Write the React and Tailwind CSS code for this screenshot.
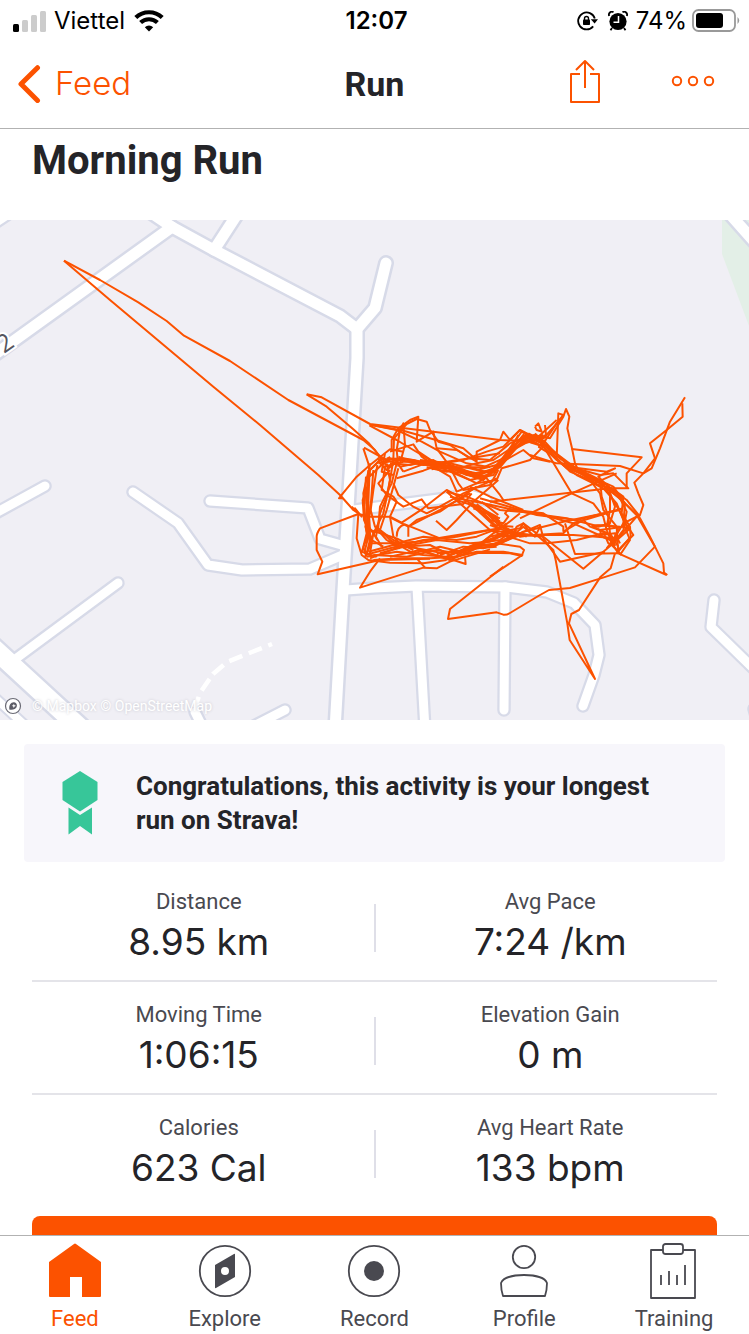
const ROADS = [
  'M-8 225 L10 213',
  'M45 486 L-6 514',
  'M133 492 L178 523 L208 565 L242 570 L310 569 L345 554',
  'M210 501 L308 508 L320 539 L345 546',
  'M118 583 L14 660',
  'M285 710 L246 730',
  'M195 712 L205 732',
  'M354 510 L400 504 L470 495 L486 500',
  'M346 590 L374 588 L416 586 L506 587 L547 592 L574 603 L595 625 L599 655 L594 675 L583 706',
  'M417 587 L425 730',
  'M505 587 L504 710',
  'M714 600 L711 627 L755 670',
  'M754 709 L760 730',
]

const MAIN_ROADS = [
  'M-10 358 L172 227',
  'M144 208 L172 227 L214 250 L340 316 L357 329',
  'M214 250 L238 213',
  'M386 263 L375 308 L357 329 L357 358 L350 475 L343 590 L335 730',
  'M728 212 L760 248',
]

// Track points sit on a grid three times finer than the map
const TRACK = [
  'M-678 -358 L-570 -300 L-455 -233 L-370 -177 L-318 -133 L-180 -57 L-5 60 L220 180 L255 210 L275 240',
  'M-678 -358 L-540 -240 L-230 20 L-90 135 L0 212 L85 285 L150 345 L190 390 L210 403',
  'M50 43 L95 52 L240 132 L430 155 L630 180 L720 184',
  'M50 43 L110 80 L190 148 L235 188 L275 235 L320 250',
  'M240 134 L320 150 L395 185 L450 215 L530 250 L600 262',
  'M238 136 L320 180 L420 240 L470 262 L560 280',
  'M250 136 L340 152 L430 178 L520 205 L560 240',
  'M205 402 L90 445 Q80 460 80 470 L80 510 L97 545 L83 583 L270 540 L420 536',
  'M205 402 L200 475 L215 525 L235 540 L300 548 L400 550 L470 540',
  'M270 535 L240 575 L210 623 L400 563 L440 565 L480 545 L600 508',
  'M380 535 L405 563 M525 530 L527 552 L490 540 L440 525',
  'M158 355 L147 355 L155 345 L200 290 L240 255 L300 208 L340 215',
  'M185 380 L215 410 L195 385 L205 402 L240 410',
  'M305 215 L305 180 L325 145 L360 120 L385 110 L380 185 L430 155 L440 205 L480 260',
  'M310 240 L312 175 L350 132 L380 117 L410 125 L420 150 L445 185 L480 195 L540 235 L630 220',
  'M330 250 L345 195 L340 130 L330 150 L320 210 L325 260',
  'M220 205 L235 250 L240 285 M222 203 L290 240',
  'M300 215 L370 193 L395 230 L440 262 M370 193 L385 215 L430 245',
  // left side of the loop
  'M270 240 L235 275 L220 340 L225 410 L232 470 L215 515 L240 525',
  'M275 235 L240 270 L228 350 L232 430 L245 480 L280 500',
  'M300 230 L238 290 L235 370 L240 450 L225 510 L230 530',
  'M240 250 L232 320 L218 360 L222 420 L238 455 L240 500 L225 530',
  'M250 270 L245 340 L240 400 L230 440 L240 470',
  'M228 290 L222 380 L230 460 L220 500 L225 520 L260 530',
  'M262 255 L250 330 L242 390 L255 440 L290 480 L330 505',
  'M320 250 L305 310 L270 380 L265 440 L240 480 L230 520',
  'M290 250 L300 300 L290 350 L270 400 L258 470 L275 500',
  'M310 240 L295 330 L280 400 L250 460 L240 520',
  'M325 265 L310 320 L290 390 L270 450 L310 480 L370 510',
  'M230 330 L238 400 L226 440 L242 490 L300 490 L350 500',
  'M235 270 L232 360 L236 440 L250 460 L262 480',
  'M265 245 L290 270 L320 245 L340 275 M262 235 L300 262 L330 235 M285 220 L275 275 L310 285',
  'M300 270 L265 310 L290 345 L340 380 L395 358 L415 385 L520 372 L545 340',
  'M285 260 L275 330 L310 350 L320 365 L300 410 L310 470 L340 500',
  'M310 310 L325 345 L370 380 L410 400 L440 385 L520 340 L620 295',
  'M240 410 L300 410 L335 428 L400 385 L470 330 L560 380 L630 450',
  'M438 422 L470 450 L500 420 L550 365 L625 300',
  'M355 470 L355 440 L450 390 L540 340 M320 470 Q320 440 345 433 L450 475',
  'M300 412 L355 440 L380 420 L450 395 L560 320',
  // top edge
  'M270 240 L340 235 L420 250 L500 265 L560 290 L610 265 L650 220 L690 180 L740 190',
  'M265 250 L330 240 L400 255 L470 250 L550 280 L600 275 L640 240 L700 165 L750 185',
  'M280 260 L340 245 L410 245 L480 275 L540 300 L610 285 L655 215 L720 180 L760 200',
  'M320 295 L400 272 L460 250 L520 240 L590 215 L640 200 L690 150 L740 180',
  'M290 235 L370 240 L440 262 L520 270 L570 295 L620 270 L680 200 L730 175',
  'M340 275 L420 245 L500 262 L580 262 L640 235 L690 190 L740 175 L800 120',
  'M300 250 L360 255 L430 240 L500 280 L560 310 L620 300 L635 265 L720 240 L760 200',
  'M330 260 L400 245 L450 270 L520 280 L580 300 L615 265 L650 230 L685 165',
  'M325 230 L380 250 L460 265 L540 262 L600 280 L670 210 L705 190 L770 170',
  'M440 205 L500 210 L560 245 L560 215 L630 180 L640 155 L660 180 L690 150 L730 170',
  'M430 260 L480 290 L500 335 L560 310 L590 290 L630 250',
  'M390 240 L480 250 L560 270 L620 255 L700 210 L730 235 L780 245',
  'M420 250 L470 245 L540 235 L600 240 L660 190 L720 165',
  'M410 262 L470 275 L560 250 L610 240 L670 200 L700 170 L760 190 L800 130 L820 105 L805 100 L800 235',
  'M405 245 L450 255 L500 270 L550 290 L600 285 L625 260 L660 205 L700 175 L735 165',
  'M415 255 L490 262 L560 285 L610 270 L645 225 L695 155 L745 185 L765 165',
  'M425 268 L470 258 L530 285 L590 272 L630 262 L670 215 L710 170 L760 175 L810 120',
  'M530 285 L590 295 L630 345 L640 360 M540 320 L600 350 L700 390 M480 262 L505 310 L520 330 L600 315 L625 270',
  'M735 140 L745 130 L755 155 L740 150 L735 140 M765 135 L768 165 L750 185 M735 160 L770 200 M700 180 L760 165 M715 160 L765 185 L745 200',
  // climb to the right-hand peak, then down the right side
  'M730 165 L780 175 L820 110 L828 87 L838 110 L832 145 L845 200 L855 250 L870 280',
  'M740 180 L790 215 L850 270 L930 310 L990 355 L1040 405 L1095 500 L1120 550 L1122 578 L1132 585',
  'M750 190 L800 240 L860 285 L940 325 L980 370 L1000 420 L1030 465 L985 510',
  'M745 200 L785 225 L830 265 L900 290 L960 330 L1010 375 L1050 415 L1080 470 L1095 500',
  'M700 180 L760 200 L820 255 L880 280 L970 320 L1005 370 L1000 430 L1020 480 L990 525',
  'M760 180 L810 235 L870 270 L930 300 L960 345 L990 395 L1015 450 L970 490',
  'M765 195 L815 250 L865 275 L925 315 L965 325 L1000 350 L995 400 L1020 440 L1022 470 L980 520',
  'M755 185 L805 225 L845 255 L905 295 L950 315 L985 345 L1010 395 L1000 450 L965 495 L995 525',
  'M770 195 L845 262 L950 275 L975 265 L925 290 L955 320 L1010 360 L1030 385 L1050 410',
  'M755 190 L785 240 L830 315 L845 340 L910 370 L940 410 L950 450 L970 500',
  'M780 215 L840 275 L900 300 L930 340 L940 390 L980 440 L985 520',
  'M845 207 L1055 232 L1010 280 L1010 325',
  'M720 225 L800 250 L990 258 L1060 280',
  'M840 260 L930 285 L970 280 L1015 325 L960 325 L960 390 L950 440',
  'M930 300 L935 350 L955 410 L960 460 L985 500',
  'M950 310 L975 380 L960 430 L925 440 L905 435',
  'M1185 52 L1140 125 L1110 205 L1085 265 L1060 280 L1033 308 L1045 340 L1060 375 L1050 405 L1000 430 L970 480 L950 505',
  'M1177 70 L1178 110 L1130 150 L1080 190 L1095 235 L1060 280',
  // middle
  'M600 365 L840 338 L960 325',
  'M690 415 L845 340 L980 280',
  'M470 335 L530 350 L630 390 L740 400 L850 430 L960 480 L985 520 L1130 585',
  'M480 350 L580 370 L720 400 L830 415 L910 435 L990 440',
  'M570 355 L640 375 L740 405 L860 420 L960 395 L1000 385',
  'M545 370 L620 410 L630 440 L660 450 L690 445 L700 430 L740 460',
  'M560 380 L600 420 L640 430 L655 410 L645 400 L655 388 L760 400 L820 440 L820 455',
  'M540 375 L590 400 L630 440 L680 460 L730 465 L820 460 L850 430 L950 400',
  'M570 380 L630 425 M550 385 L630 415 M575 365 L625 405 M560 372 L640 438 L690 470',
  'M470 335 L600 450 L650 470 M500 360 L545 375 L610 435 L670 440',
  // bottom edge
  'M225 525 L300 505 L400 480 L500 470 L600 450 L700 465 L850 465 L980 475',
  'M230 530 L320 515 L400 525 L470 530 L540 500 L620 495 L700 455 L820 425 L990 390',
  'M240 535 L330 500 L420 495 L480 525 L560 490 L630 480 L670 450',
  'M235 515 L310 495 L380 505 L460 520 L540 510 L620 470 L690 465',
  'M250 525 L350 530 L440 510 L500 520 L580 485 L640 465 L720 490 L770 490 L860 480 L940 460',
  'M270 520 L360 495 L440 480 L540 490 L600 485 L650 460 L700 460',
  'M300 530 L390 510 L470 535 L540 520 L600 518 L660 520 L695 528 L702 510 L690 500 L620 490',
  'M250 540 L330 535 L420 535 L500 530 L560 515 L640 515 L697 525 L600 590',
  'M240 450 L320 475 L400 515 L480 540 L560 505 L620 500',
  'M260 440 L310 490 L380 485 L470 470 L630 445',
  'M320 490 L400 470 L500 480 L560 470 L640 440 L690 400',
  'M300 480 L370 520 L450 500 L530 520 L600 470 L660 455 L710 470',
  'M450 525 L520 500 L580 505 L640 480 L690 460 L750 435 L760 475 L810 545 L945 515',
  'M440 520 L510 515 L570 495 L630 490 L690 465 L650 450 L620 470 L550 500 L470 530',
  'M500 525 L560 500 L610 460 L650 430 M520 510 L600 500 L650 475 L680 450',
  'M640 450 L670 465 L700 440 L735 470 L752 437',
  'M600 435 L640 450 L665 455 L690 470 L725 465 L700 430 L680 440 L665 470',
  'M700 465 L760 470 L880 566 L970 490 L1040 410',
  'M735 460 L790 510 L797 540 L832 730 L839 780 L915 897 L837 730 L844 702 L867 690 L932 590 L962 565 L975 520',
  'M825 430 L855 522 L985 520 M820 455 L880 420 L900 440 L955 460',
  'M905 440 Q960 430 985 445 L970 480 L935 470 L930 450 L1000 440',
  'M910 440 L960 465 L975 495 L955 490 L940 455 M930 465 L975 460 L990 490',
  'M640 560 L480 687 L474 717 L620 697 L640 704 Q650 705 660 699 L745 648 L777 630 L840 624 L932 595 L1035 562 L1095 500',
]

const STATS = [
  [['Distance', '8.95 km'], ['Avg Pace', '7:24 /km']],
  [['Moving Time', '1:06:15'], ['Elevation Gain', '0 m']],
  [['Calories', '623 Cal'], ['Avg Heart Rate', '133 bpm']],
]

function StatusBar() {
  return (
    <div className="grid h-10 grid-cols-[1fr_auto_1fr] items-center pt-0.5 pr-2 pl-3 font-['Inter',sans-serif] text-2xl text-black">
      <div className="flex items-center gap-2">
        <svg width="34" height="22" viewBox="0 0 34 22">
          <rect x="1" y="14" width="6" height="8" rx="1.5" fill="#000" />
          <rect x="10" y="10" width="6" height="12" rx="1.5" fill="#ccc" />
          <rect x="19" y="5" width="6" height="17" rx="1.5" fill="#ccc" />
          <rect x="28" y="1" width="6" height="21" rx="1.5" fill="#ccc" />
        </svg>
        <span>Viettel</span>
        <svg width="32" height="22" viewBox="0 0 30 22" fill="none" stroke="#000" strokeWidth="4.2">
          <path d="M1.8 7.6 A19 19 0 0 1 28.2 7.6" />
          <path d="M6.6 12.6 A12.2 12.2 0 0 1 23.4 12.6" />
          <path d="M15 21.5 L10.8 17.3 A6 6 0 0 1 19.2 17.3 Z" fill="#000" stroke="none" />
        </svg>
      </div>
      <span className="font-semibold">12:07</span>
      <div className="flex items-center justify-end">
        <svg className="mr-2.5" width="21" height="20" viewBox="0 0 21 20" fill="none" stroke="#000" strokeWidth="1.8">
          <path d="M16.2 15.4 A8.5 8.5 0 1 1 17.8 7.5" />
          <path d="M13.8 8.3 H21 L17.6 12.6 Z" fill="#000" stroke="none" />
          <rect x="6" y="8.6" width="7" height="5.4" rx="0.8" fill="#000" stroke="none" />
          <path d="M7.5 9 V7.5 A2 2 0 0 1 11.5 7.5 V9" strokeWidth="1.4" />
        </svg>
        <svg className="mr-2" width="20" height="20" viewBox="0 0 20 20">
          <circle cx="10" cy="10.5" r="8.6" />
          <path d="M1.2 5 A3 3 0 0 1 5.5 1.2 M14.5 1.2 A3 3 0 0 1 18.8 5 M4 17 L2.5 19.2 M16 17 L17.5 19.2" stroke="#000" strokeWidth="1.8" fill="none" />
          <path d="M10.5 5 V11.2 H5.5" fill="none" stroke="#fff" strokeWidth="1.5" />
        </svg>
        <span>74%</span>
        <svg className="ml-1" width="50" height="24" viewBox="0 0 50 24">
          <rect x="2" y="1" width="42" height="21" rx="5.5" fill="none" stroke="#999" strokeWidth="1.8" />
          <rect x="5" y="4" width="27" height="15" rx="3" />
          <path d="M46.5 8 Q50 11.5 46.5 15 Z" fill="#999" />
        </svg>
      </div>
    </div>
  )
}

function NavBar() {
  return (
    <header className="grid h-[89px] grid-cols-[1fr_auto_1fr] items-center border-b border-[#b2b2b2] px-4">
      <a href="#feed" className="flex items-center gap-3.5 font-['Inter',sans-serif] text-[33px] font-light text-[#fc5200]">
        <svg width="25" height="38" viewBox="0 0 25 38" fill="none" stroke="currentColor" strokeWidth="5" strokeLinecap="round" strokeLinejoin="round">
          <path d="M21.5 2.7 L5 19 L21.5 35.5" />
        </svg>
        Feed
      </a>
      <span className="text-[34px] font-bold text-[#242428]">Run</span>
      <div className="flex items-center justify-end gap-16 pr-4 pb-1.5 text-[#fc5200]">
        <button type="button" aria-label="Share">
          <svg width="42" height="46" viewBox="0 0 42 46" fill="none" stroke="currentColor" strokeWidth="2" strokeLinejoin="round">
            <path d="M15 16 H6 V44 H34 V16 H25 M20 30 V3 M11 12 L20 3 L29 12" />
          </svg>
        </button>
        <button type="button" aria-label="More">
          <svg width="46" height="12" viewBox="0 0 46 12" fill="none" stroke="currentColor" strokeWidth="2">
            <circle cx="6" cy="6" r="4.2" />
            <circle cx="22" cy="6" r="4.2" />
            <circle cx="38" cy="6" r="4.2" />
          </svg>
        </button>
      </div>
    </header>
  )
}

function RouteMap() {
  return (
    <div className="relative">
      <svg className="block h-auto w-full" viewBox="0 220 749 500" fill="none" role="img" aria-label="Route map">
        <rect x="0" y="220" width="749" height="500" fill="#f0eff5" />
        <path d="M722 220 V254 L749 326 V220 Z" fill="#e3efe7" />
        <g strokeLinecap="round" strokeLinejoin="round">
          <g stroke="#d7dae8">
            {ROADS.map((d) => <path key={d} d={d} strokeWidth="13.5" />)}
            {MAIN_ROADS.map((d) => <path key={d} d={d} strokeWidth="16" />)}
            <path d="M-10 645 L90 737" strokeWidth="24" />
            <path d="M-8 695 L30 730" strokeWidth="12" />
          </g>
          <g stroke="#fff">
            {ROADS.map((d) => <path key={d} d={d} strokeWidth="9" />)}
            {MAIN_ROADS.map((d) => <path key={d} d={d} strokeWidth="11" />)}
            <path d="M-10 645 L90 737" strokeWidth="19" />
            <path d="M-8 695 L30 730" strokeWidth="8" />
          </g>
        </g>
        <path d="M272 644 L227 662 L213 674 L200 693 L195 708" stroke="#fff" strokeWidth="4.5" strokeDasharray="4 7 14 7 14 7 14 6 14 7 14 7" />
        <text x="4" y="354" fontSize="25" fill="#55555f" stroke="#fff" strokeWidth="4" paintOrder="stroke" transform="rotate(-35 4 354)" className="font-['Open_Sans',sans-serif]">2</text>
        <g transform="translate(290 380) scale(0.33333)" stroke="#fc5200" strokeWidth="6" strokeLinejoin="round">
          {TRACK.map((d) => <path key={d} d={d} />)}
        </g>
      </svg>
      <div className="absolute bottom-1 left-1 flex items-center gap-2.5 text-sm text-white">
        <svg width="18" height="18" viewBox="0 0 18 18" fill="none">
          <circle cx="9" cy="9" r="7.5" fill="#fff" stroke="#6b6b75" strokeWidth="1.2" />
          <path d="M5.5 12.8 C4.5 8 7 5 10 5.2 C13 5.5 13.8 9 12 11 C10.5 12.7 8 12.8 5.5 12.8 Z" fill="#5c5c66" />
          <path d="M9.8 6.8 L10.5 8.2 L12 8.8 L10.5 9.4 L9.8 10.9 L9.2 9.4 L7.7 8.8 L9.2 8.2 Z" fill="#fff" />
        </svg>
        <span className="[text-shadow:0_0_3px_#c4c4cc]">© Mapbox © OpenStreetMap</span>
      </div>
    </div>
  )
}

function Stat({ label, value }) {
  return (
    <div className="flex flex-1 flex-col items-center">
      <dt className="text-[22px] leading-7 text-[#494950]">{label}</dt>
      <dd className="font-['Inter',sans-serif] text-[37px] leading-[52px] text-[#242428]">{value}</dd>
    </div>
  )
}

function FeedIcon() {
  return <path d="M26 1 Q27 0 28 1 L53 19 V53 Q53 54 52 54 H34 V34 H22 V54 H2 Q1 54 1 53 V19 Z" fill="currentColor" />
}

function ExploreIcon() {
  return (
    <>
      <circle cx="27" cy="28" r="25.2" />
      <path fillRule="evenodd" d="M17 22 L36 11 Q37 10.5 37 11.5 V34 L18 45 Q17 45.5 17 44.5 Z M27 24 A4 4 0 1 0 27 32 A4 4 0 1 0 27 24 Z" fill="currentColor" stroke="none" />
    </>
  )
}

function RecordIcon() {
  return (
    <>
      <circle cx="27" cy="28" r="25.2" />
      <circle cx="27" cy="28" r="10" fill="currentColor" stroke="none" />
    </>
  )
}

function ProfileIcon() {
  return (
    <>
      <circle cx="27" cy="14" r="11.2" />
      <path d="M6 53 Q4 47 4 40 C6 35 15 32 27 32 C39 32 48 35 50 40 Q50 47 48 53 Z" />
    </>
  )
}

function TrainingIcon() {
  return (
    <>
      <path d="M16 7 H4 V55 H48 V7 H36" />
      <rect x="16" y="1" width="20" height="10" rx="2.5" />
      <path d="M14 32 V42 M22 28 V42 M30 32 V42 M38 22 V42" />
    </>
  )
}

const TABS = [
  { name: 'Feed', Icon: FeedIcon, active: true },
  { name: 'Explore', Icon: ExploreIcon },
  { name: 'Record', Icon: RecordIcon },
  { name: 'Profile', Icon: ProfileIcon },
  { name: 'Training', Icon: TrainingIcon },
]

function TabBar() {
  return (
    <nav className="flex border-t border-[#b2b2b2] bg-white pt-[7px]">
      {TABS.map(({ name, Icon, active }) => (
        <a key={name} href={'#' + name.toLowerCase()} className={`flex flex-1 flex-col items-center gap-1.5 ${active ? 'text-[#fc5200]' : 'text-[#494950]'}`}>
          <svg width="54" height="58" viewBox="0 0 54 58" fill="none" stroke={active ? 'none' : 'currentColor'} strokeWidth="1.8" strokeLinejoin="round">
            <Icon />
          </svg>
          <span className="pb-[3px] text-[22px] leading-6">{name}</span>
        </a>
      ))}
    </nav>
  )
}

export default function App() {
  return (
    <div className="flex h-screen flex-col bg-white font-['Roboto',sans-serif]">
      <StatusBar />
      <NavBar />
      <main className="min-h-0 flex-1 overflow-y-auto [scrollbar-width:none]">
        <h1 className="px-8 pt-2 pb-[35px] text-[40px] leading-[48px] font-bold text-[#242428]">Morning Run</h1>
        <RouteMap />
        <section className="mx-6 mt-6 flex items-center gap-[37px] rounded bg-[#f7f6fb] px-[37px] py-[25px]">
          <svg className="shrink-0" width="38" height="66" viewBox="0 0 38 66" fill="#37c699">
            <path d="M19 1 L36.5 12 V30 L19 41.5 L1.5 30 V12 Z" />
            <path d="M7.5 37.5 L19 45 L31 37.5 V64.5 L19 56 L7.5 64.5 Z" />
          </svg>
          <p className="text-[26px] leading-[34px] font-bold text-[#242428]">Congratulations, this activity is your longest run on Strava!</p>
        </section>
        <dl className="mx-8 mt-[7px] divide-y-2 divide-[#e4e4e9]">
          {STATS.map(([left, right]) => (
            <div key={left[0]} className="pt-[19px] pb-3">
              <div className="-mx-2 flex items-center">
                <Stat label={left[0]} value={left[1]} />
                <div className="h-12 w-0.5 bg-[#dfdfe8]" />
                <Stat label={right[0]} value={right[1]} />
              </div>
            </div>
          ))}
        </dl>
        <button type="button" aria-label="View analysis" className="mx-8 mt-2.5 block h-20 w-[calc(100%-64px)] rounded-lg bg-[#fc5200]" />
      </main>
      <TabBar />
    </div>
  )
}
